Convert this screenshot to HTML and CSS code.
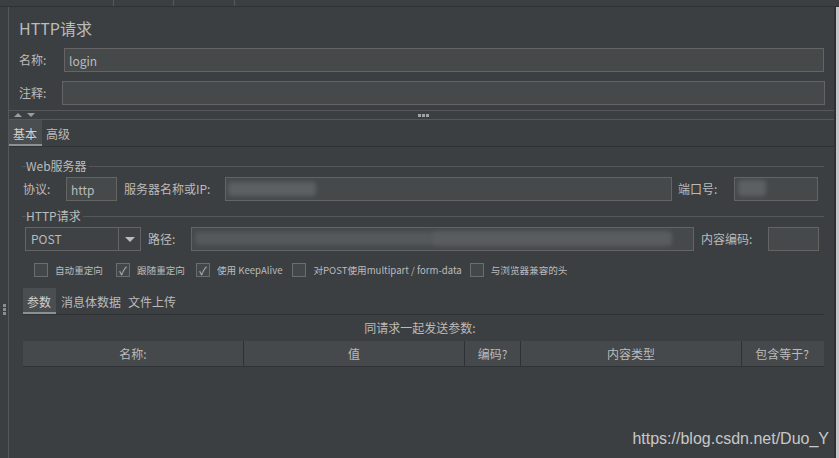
FILE: index.html
```html
<!DOCTYPE html>
<html>
<head>
<meta charset="utf-8">
<link rel="stylesheet" href="styles.css">
</head>
<body>
<div class="topbar"><span class="sep s1"></span><span class="sep s2"></span><span class="sep s3"></span></div>
<div class="app">
  <div class="lefthandle"><div class="dots"><i></i><i></i><i></i></div></div>
  <div class="main">
    <div class="title">HTTP请求</div>
    <div class="row r-name"><span class="lbl">名称:</span><div class="input"><span>login</span></div></div>
    <div class="row r-comment"><span class="lbl">注释:</span><div class="input"></div></div>
    <div class="splitter">
      <span class="arrows"><span class="up"></span><span class="down"></span></span>
      <span class="grip"><i></i><i></i><i></i></span>
    </div>
    <div class="tabs tabs-top">
      <span class="tab active">基本</span><span class="tab">高级</span>
    </div>
    <div class="panel">
      <div class="group-title"><span class="dash"></span><span class="gt">Web服务器</span><span class="line"></span></div>
      <div class="frow r-server">
        <span class="lbl l-proto">协议:</span>
        <div class="input w-proto"><span>http</span></div>
        <span class="lbl l-server">服务器名称或IP:</span>
        <div class="input w-server"><span class="blur b-server"></span></div>
        <span class="lbl l-port">端口号:</span>
        <div class="input w-port"><span class="blur b-port"></span></div>
      </div>
      <div class="group-title g2"><span class="dash"></span><span class="gt">HTTP请求</span><span class="line"></span></div>
      <div class="frow r-path">
        <div class="combo"><span class="cval">POST</span><span class="carrow"><span class="tri"></span></span></div>
        <span class="lbl l-path">路径:</span>
        <div class="input w-path"><span class="blur b-path1"></span><span class="blur b-path2"></span></div>
        <span class="lbl l-enc">内容编码:</span>
        <div class="input w-enc"></div>
      </div>
      <div class="checks">
        <label class="chk c1"><span class="box"></span>自动重定向</label>
        <label class="chk c2"><span class="box checked">✓</span>跟随重定向</label>
        <label class="chk c3"><span class="box checked">✓</span>使用 KeepAlive</label>
        <label class="chk c4"><span class="box"></span>对POST使用multipart / form-data</label>
        <label class="chk c5"><span class="box"></span>与浏览器兼容的头</label>
      </div>
      <div class="tabs tabs-params">
        <span class="tab active">参数</span><span class="tab">消息体数据</span><span class="tab">文件上传</span>
      </div>
      <div class="caption">同请求一起发送参数:</div>
      <div class="thead">
        <span class="th c-name">名称:</span>
        <span class="th c-val">值</span>
        <span class="th c-enc">编码?</span>
        <span class="th c-type">内容类型</span>
        <span class="th c-eq">包含等于?</span>
      </div>
      <div class="watermark">https://blog.csdn.net/Duo_Y</div>
    </div>
  </div>
  <div class="rightstrip"></div>
</div>
</body>
</html>
```
FILE: styles.css
```css
* { box-sizing: border-box; }
html, body { margin: 0; padding: 0; }
body {
  width: 839px;
  height: 458px;
  overflow: hidden;
  background: #3c3f41;
  color: #bbbbbb;
  font-family: "Noto Sans CJK SC", "Noto Sans", sans-serif;
  font-size: 12px;
}
.topbar {
  height: 7px;
  border-bottom: 1px solid #2f3234;
  display: flex;
  position: relative;
}
.sep { width: 1px; height: 6px; background: #55585a; margin-left: 113px; }
.sep.s2 { margin-left: 59px; }
.sep.s3 { margin-left: 60px; }

.app { display: flex; height: 451px; }
.lefthandle {
  width: 9px;
  border-right: 1px solid #55585a;
  display: flex;
  flex-direction: column;
  padding-top: 297px;
  padding-left: 3px;
}
.dots { display: flex; flex-direction: column; gap: 1px; }
.dots i { display: block; width: 3px; height: 3px; background: #8a8d8f; }
.main { flex: 1; display: flex; flex-direction: column; }
.rightstrip { width: 5px; border-left: 2px solid #2f3234; background: #c4c6c8; }

.title {
  font-size: 16px;
  line-height: 20px;
  height: 20px;
  margin: 11px 0 10px 10px;
  color: #bbbbbb;
}
.row { display: flex; align-items: center; height: 24px; }
.row .lbl { width: 55px; padding-left: 10px; line-height: 24px; }
.r-name .input { width: 760px; }
.r-comment { margin-top: 9px; }
.r-comment .lbl { width: 53px; }
.r-comment .input { width: 763px; }
.input {
  height: 24px;
  background: #45494a;
  border: 1px solid #646464;
  position: relative;
  overflow: hidden;
  display: flex;
  align-items: center;
}
.input span { padding-left: 4px; font-size: 12px; }

.splitter {
  margin-top: 5px;
  height: 10px;
  border-top: 1px solid #55585a;
  border-bottom: 1px solid #55585a;
  display: flex;
  align-items: center;
  position: relative;
}
.arrows { display: flex; gap: 5px; margin-left: 5px; }
.arrows .up { width: 0; height: 0; border-left: 4px solid transparent; border-right: 4px solid transparent; border-bottom: 4px solid #9a9da0; }
.arrows .down { width: 0; height: 0; border-left: 4px solid transparent; border-right: 4px solid transparent; border-top: 4px solid #9a9da0; }
.grip { display: flex; gap: 1px; margin-left: 383px; }
.grip i { display: block; width: 3px; height: 3px; background: #a0a3a6; }

.tabs {
  display: flex;
  height: 27px;
  border-bottom: 1px solid #2f3234;
}
.tab {
  padding: 2px 4px 0;
  line-height: 24px;
  height: 26px;
  font-size: 12px;
  color: #bbbbbb;
}
.tab.active {
  background: #4a4e51;
  border-bottom: 2px solid #8e9194;
  color: #d0d0d0;
}
.tabs-top .tab.active { width: 33px; }

.panel { padding-left: 13px; padding-right: 10px; display: flex; flex-direction: column; position: relative; flex: 1; }
.group-title { display: flex; align-items: center; height: 14px; margin-top: 12px; }
.group-title .dash { width: 4px; height: 1px; background: #55585a; }
.group-title .gt { padding: 0 2px 0 0; line-height: 14px; font-size: 12px; }
.group-title .line { flex: 1; height: 1px; background: #55585a; }
.group-title.g2 { margin-top: 8px; }

.frow { display: flex; align-items: center; height: 24px; margin-top: 4px; }
.frow .lbl { line-height: 24px; }
.l-proto { padding-left: 1px; width: 44px; }
.w-proto { width: 51px; }
.l-server { padding-left: 7px; width: 108px; }
.w-server { width: 447px; }
.l-port { padding-left: 6px; width: 62px; }
.w-port { width: 84px; }

.combo {
  width: 116px;
  height: 24px;
  margin-left: 3px;
  border: 1px solid #646464;
  background: #3e4244;
  display: flex;
}
.cval { flex: 1; padding-left: 5px; line-height: 22px; border-right: 1px solid #646464; }
.carrow { width: 21px; display: flex; align-items: center; justify-content: center; }
.tri { width: 0; height: 0; border-left: 5px solid transparent; border-right: 5px solid transparent; border-top: 5px solid #bbbbbb; }
.l-path { padding-left: 7px; width: 50px; }
.w-path { width: 503px; }
.l-enc { padding-left: 7px; width: 74px; }
.w-enc { width: 51px; }

.blur { position: absolute; background: #5c6062; filter: blur(2px); border-radius: 4px; padding: 0 !important; }
.b-server { left: 2px; top: 4px; width: 88px; height: 14px; }
.b-port { left: 3px; top: 2px; width: 28px; height: 16px; }
.b-path1 { left: 3px; top: 4px; width: 240px; height: 13px; background: #55595b; }
.b-path2 { left: 240px; top: 3px; width: 240px; height: 15px; background: #595d5f; }

.checks { display: flex; align-items: center; height: 14px; margin-top: 12px; font-size: 9.6px; }
.chk { display: flex; align-items: center; gap: 7px; white-space: nowrap; }
.box {
  width: 14px; height: 14px;
  border: 1px solid #6b6e70;
  background: #43474a;
  display: flex; align-items: center; justify-content: center;
  font-size: 11px; line-height: 1; color: #c0c0c0;
}
.c1 { margin-left: 12px; }
.c2 { margin-left: 13px; }
.c3 { margin-left: 11px; }
.c4 { margin-left: 10px; }
.c5 { margin-left: 8px; }

.tabs-params { margin-top: 11px; height: 27px; margin-left: 1px; }
.tabs-params .tab { padding: 2px 2px 0; }
.tabs-params .tab.active { padding: 2px 4px 0; width: 33px; }
.tabs-params .tab + .tab { margin-left: 3px; }

.caption { text-align: center; line-height: 26px; height: 26px; padding-right: 6px; }
.thead {
  display: flex;
  height: 26px;
  margin-left: 1px;
  background: #45494b;
  border-bottom: 1px solid #2f3234;
}
.th { text-align: center; line-height: 25px; border-right: 1px solid #2f3234; }
.c-name { width: 221px; }
.c-val { width: 221px; }
.c-enc { width: 56px; }
.c-type { width: 221px; }
.c-eq { width: 80px; border-right: none; }

.watermark {
  position: absolute;
  right: 5px;
  bottom: 10px;
  font-family: "Liberation Sans", Arial, sans-serif;
  font-size: 16px;
  color: #c8c8c8;
}
```
